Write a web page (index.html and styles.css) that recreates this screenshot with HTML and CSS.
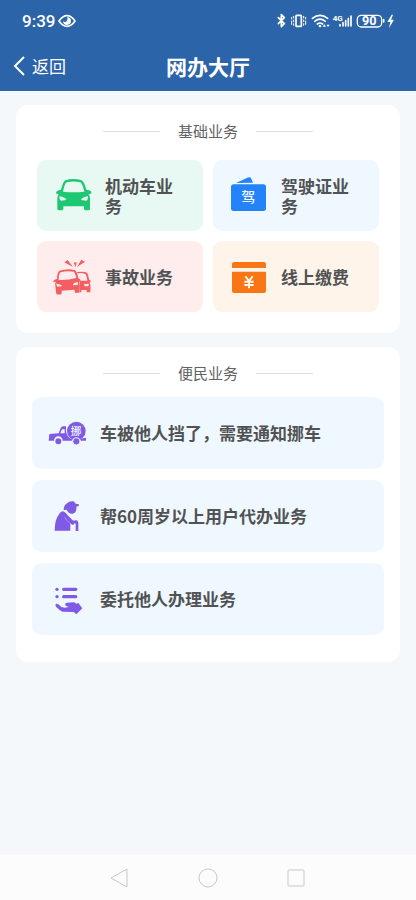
FILE: index.html
```html
<!DOCTYPE html>
<html lang="zh-CN">
<head>
<meta charset="utf-8">
<meta name="viewport" content="width=device-width, initial-scale=1">
<title>网办大厅</title>
<link rel="stylesheet" href="styles.css">
</head>
<body>
<header class="header">
  <div class="status">
    <div class="status-left">
      <span class="clock">9:39</span>
      <svg width="18" height="14" viewBox="0 0 54 42" aria-hidden="true">
        <path d="M3 21Q14 5 27 5T51 21Q40 37 27 37T3 21Z" fill="none" stroke="#fff" stroke-width="5"/>
        <path d="M28 9a12 12 0 1 1-13 13q6 4 11 0 4-6 2-13Z" fill="#fff"/>
      </svg>
    </div>
    <svg class="status-icons" width="120" height="20" viewBox="30 18 360 60" aria-hidden="true">
      <g fill="none" stroke="#fff" stroke-width="5" stroke-linejoin="round" stroke-linecap="round">
        <path d="M37 38 55 56 46 65V29L55 38 37 56"/>
        <rect x="90" y="31" width="16" height="33" rx="2"/>
        <path d="M77 37V42M77 48V58M83 34V39M83 45V50M83 56V61M119 37V42M119 48V58M113 34V39M113 45V50M113 56V61" stroke-width="3"/>
        <path d="M139 40Q162 22 185 40"/>
        <path d="M146 49Q162 36 178 49"/>
        <path d="M154 57Q162 51 170 57"/>
        <path d="M222 59V63M231 53V63M239 47V63M247 40V63M255 33V63"/>
        <rect x="274" y="31" width="73" height="35" rx="12" stroke-width="4"/>
        <path d="M353 44V51"/>
      </g>
      <circle cx="162" cy="63" r="4" fill="#fff"/>
      <path d="M170 65 175 58 180 65ZM181 59H191L186 66Z" fill="#fff"/>
      <path d="M377 29 364 51H373L369 69 384 44H375L381 29Z" fill="#fff"/>
      <text x="200" y="49" class="network">4G</text>
      <text x="310" y="61" class="battery">90</text>
    </svg>
  </div>
  <div class="titlebar">
    <button class="back" type="button">
      <svg width="12" height="20" viewBox="0 0 12 20" aria-hidden="true"><path d="M11 1 2 10 11 19" fill="none" stroke="#fff" stroke-width="2"/></svg>
      <span>返回</span>
    </button>
    <h1 class="title">网办大厅</h1>
  </div>
</header>

<main class="content">
  <section class="card">
    <h2 class="section-title">基础业务</h2>
    <div class="tiles">
      <a class="item green" href="#vehicle">
        <svg class="icon" viewBox="24 33 120 120" aria-hidden="true">
          <path fill="#1ec772" fill-rule="evenodd" d="M61 46Q86 38 110 46 117 49 124 74L132 76Q141 79 139 85 137 88 131 87 135 93 135 101V131Q135 136 130 136H122Q117 136 117 131V124H55V131Q55 136 50 136H42Q37 136 37 131V101Q37 92 41 87 34 88 33 84 33 77 48 74 54 50 61 46ZM65 52Q59 55 54 80 86 84 118 80 112 55 106 52 86 47 65 52ZM43 94Q43 107 49 107L64 105Q62 97 43 94ZM129 94Q110 97 108 105L124 107Q129 106 129 94Z"/>
        </svg>
        <span class="label">机动车业务</span>
      </a>
      <a class="item blue" href="#license">
        <svg class="icon" viewBox="27 33 120 120" aria-hidden="true">
          <path fill="#2583fa" d="M48 54 82 38Q90 34 94 41L99 53Z"/>
          <rect x="33" y="58" width="105" height="80" rx="8" fill="#2583fa"/>
          <text x="85" y="112" class="glyph license-glyph">驾</text>
        </svg>
        <span class="label">驾驶证业务</span>
      </a>
      <a class="item red" href="#accident">
        <svg class="icon" viewBox="24 24 120 120" aria-hidden="true">
          <g fill="#f45e62" fill-rule="evenodd">
            <path d="M58 40 68 33 84 54ZM86 41 95 39 92 55ZM96 54 109 32 120 38Z"/>
            <path d="M96 69Q119 66 126 71 130 75 132 91L138 96 134 100Q138 108 136 130H125V123H109V130H104V95H127Q125 78 121 75 111 71 97 73ZM117 105 119 112H130L132 104Z"/>
            <path d="M43 65Q67 57 88 63 96 65 100 88 108 91 107 95L102 99Q106 110 103 131H90L88 122 50 125V135Q42 138 34 135L31 111Q30 104 32 98L25 99Q23 93 36 90 36 72 43 65ZM47 70Q41 74 41 93 70 94 94 87 90 70 86 68 66 64 47 70ZM33 104 37 113 51 112Q48 104 33 104ZM99 99Q83 101 84 109L98 108Z"/>
          </g>
        </svg>
        <span class="label">事故业务</span>
      </a>
      <a class="item orange" href="#payment">
        <svg class="icon" viewBox="27 24 120 120" aria-hidden="true">
          <path fill="#f97616" d="M42 39H132Q138 39 138 45V57H36V45Q36 39 42 39ZM36 68H138V126Q138 132 132 132H42Q36 132 36 126Z"/>
          <path d="M76 82 87 96 98 82M87 96V118M73 98H101M73 108H101" fill="none" stroke="#fff4ea" stroke-width="6"/>
        </svg>
        <span class="label">线上缴费</span>
      </a>
    </div>
  </section>

  <section class="card">
    <h2 class="section-title">便民业务</h2>
    <div class="rows">
      <a class="item blue" href="#move-car">
        <svg class="icon" viewBox="24 9 120 120" aria-hidden="true">
          <path fill="#7f5ae5" fill-rule="evenodd" d="M28 72 56 70 62 54Q64 49 70 49H78V64Q80 78 90 85 104 93 120 86L138 83V92H122A13 13 0 0 0 96 92H68A13 13 0 0 0 42 92H26ZM66 58 61 70H74V58Z"/>
          <circle cx="55" cy="94" r="9" fill="#7f5ae5"/>
          <circle cx="109" cy="63" r="28" fill="#7f5ae5"/>
          <circle cx="109" cy="94" r="11" fill="#7f5ae5" stroke="#f0f8ff" stroke-width="3"/>
          <text x="108" y="75" class="glyph move-glyph">挪</text>
        </svg>
        <span class="label">车被他人挡了，需要通知挪车</span>
      </a>
      <a class="item blue" href="#elderly">
        <svg class="icon" viewBox="24 18 120 120" aria-hidden="true">
          <g fill="#7f5ae5">
            <path d="M71 60Q71 45 82 39 88 32 101 34L107 41 117 43 116 48 109 50Q111 68 98 71 86 73 80 59Z"/>
            <path d="M68 64Q74 64 83 76L98 91Q104 94 108 90 115 91 115 99V123H107V101Q104 97 101 104L96 104 91 99V122H44Q44 88 58 71 62 65 68 64Z"/>
          </g>
          <path d="M74 81Q76 90 91 100" fill="none" stroke="#f0f8ff" stroke-width="1"/>
        </svg>
        <span class="label">帮60周岁以上用户代办业务</span>
      </a>
      <a class="item blue" href="#delegate">
        <svg class="icon" viewBox="24 12 120 120" aria-hidden="true">
          <g fill="#7f5ae5">
            <circle cx="51" cy="43" r="5"/><circle cx="51" cy="65" r="5"/>
            <rect x="66" y="38" width="46" height="10" rx="5"/>
            <rect x="66" y="60" width="46" height="10" rx="5"/>
            <path d="M48 86Q55 85 64 96L74 98 87 96 78 93Q72 85 80 83L102 82 110 86 115 84 127 100 109 118 101 111 67 110Q60 107 48 95 44 89 48 86Z"/>
          </g>
        </svg>
        <span class="label">委托他人办理业务</span>
      </a>
    </div>
  </section>
</main>

<nav class="navbar" aria-label="系统导航">
  <button type="button" aria-label="后退"><svg width="20" height="20" viewBox="0 0 20 20"><path d="M17 1V19L1 10Z"/></svg></button>
  <button type="button" aria-label="主页"><svg width="20" height="20" viewBox="0 0 20 20"><circle cx="10" cy="10" r="9"/></svg></button>
  <button type="button" aria-label="最近任务"><svg width="20" height="20" viewBox="0 0 20 20"><rect x="2" y="2" width="16" height="16" rx="1"/></svg></button>
</nav>
</body>
</html>
```
FILE: styles.css
```css
* {
  box-sizing: border-box;
}

body {
  margin: 0;
  min-height: 100vh;
  display: flex;
  flex-direction: column;
  background: #f4f8fa;
  color: #505254;
  font-family: "Noto Sans CJK SC", sans-serif;
}

button {
  border: 0;
  padding: 0;
  background: none;
  color: inherit;
  font: inherit;
}

.header {
  background: #2b64a8;
  color: #fff;
}

.status {
  display: flex;
  align-items: center;
  justify-content: space-between;
  height: 41px;
  padding: 0 20px 0 22px;
}

.status-left {
  display: flex;
  align-items: center;
  gap: 3px;
}

.clock {
  font-family: Roboto, sans-serif;
  font-size: 17px;
  font-weight: 500;
  line-height: 20px;
}

.network,
.battery {
  fill: #fff;
  font-family: Roboto, sans-serif;
  font-weight: 700;
}

.network {
  font-size: 24px;
}

.battery {
  font-size: 38px;
  text-anchor: middle;
}

.titlebar {
  display: grid;
  grid-template-columns: 1fr auto 1fr;
  align-items: center;
  height: 50px;
  padding: 0 13px;
}

.back {
  display: flex;
  align-items: center;
  justify-self: start;
  gap: 7px;
  font-size: 17px;
  line-height: 24px;
}

.title {
  margin: 0;
  font-size: 21px;
  font-weight: 700;
  line-height: 28px;
}

.content {
  flex: 1;
  display: flex;
  flex-direction: column;
  gap: 14px;
  padding: 14px 16px;
}

.card {
  padding: 16px 16px 27px;
  border-radius: 12px;
  background: #fff;
}

.card:first-child {
  padding-bottom: 21px;
}

.section-title {
  display: flex;
  align-items: center;
  justify-content: center;
  gap: 18px;
  margin: 0;
  font-size: 15px;
  font-weight: 400;
  line-height: 20px;
  color: #606264;
}

.section-title::before,
.section-title::after {
  content: "";
  width: 57px;
  height: 1px;
  background: #dcdddf;
}

.tiles {
  display: grid;
  grid-template-columns: 1fr 1fr;
  gap: 10px;
  padding: 19px 5px 0;
}

.rows {
  display: grid;
  gap: 11px;
  padding-top: 14px;
}

.item {
  display: flex;
  align-items: center;
  gap: 12px;
  min-height: 72px;
  padding: 10px 16px;
  border-radius: 9px;
  color: inherit;
  font-size: 17px;
  font-weight: 700;
  line-height: 20px;
  text-decoration: none;
}

.tiles .item {
  min-height: 71px;
  padding-right: 20px;
}

.green {
  background: #e8f9f3;
}

.blue {
  background: #f0f8ff;
}

.red {
  background: #ffeded;
}

.orange {
  background: #fff4ea;
}

.icon {
  flex: none;
  width: 40px;
  height: 40px;
}

.label {
  flex: 1;
}

.glyph {
  fill: #f0f8ff;
  font-weight: 500;
  text-anchor: middle;
}

.license-glyph {
  font-size: 42px;
}

.move-glyph {
  font-size: 32px;
}

.navbar {
  display: flex;
  align-items: center;
  justify-content: center;
  gap: 68px;
  height: 45px;
  background: #fcfcfc;
}

.navbar button {
  display: flex;
}

.navbar svg {
  fill: none;
  stroke: #c8c8c8;
  stroke-width: 1;
  stroke-linejoin: round;
}
```
